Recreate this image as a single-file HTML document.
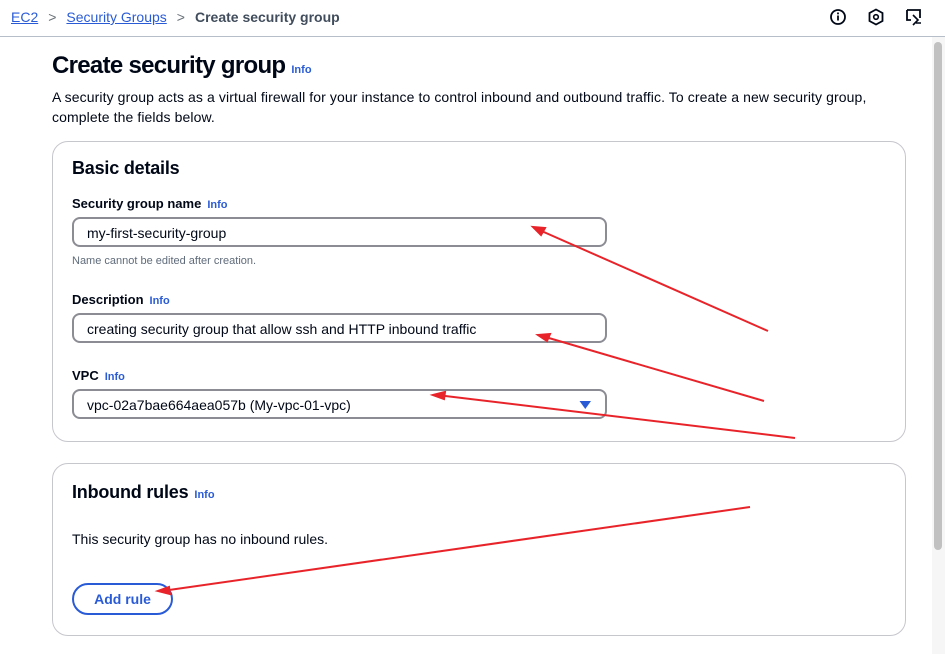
<!DOCTYPE html>
<html><head><meta charset="utf-8"><style>
*{box-sizing:border-box;margin:0;padding:0}
body{width:945px;height:654px;overflow:hidden;background:#fff;font-family:"Liberation Sans",sans-serif;color:#000716;position:relative}
.top{position:absolute;left:0;top:0;width:945px;height:37px;border-bottom:1px solid #b6bec9}
.bc{position:absolute;top:9px;left:11px;font-size:14px;color:#414d5c}
.bc a{text-decoration:underline;color:#2a5bd7}
.bc .s{margin:0 10px;color:#687078}
.ab{position:absolute;font-size:14px}
h1{position:absolute;left:52px;top:52px;font-size:24px;font-weight:bold;letter-spacing:-0.7px}
.info{color:#2a5bd7;font-size:11px;font-weight:bold;margin-left:6px;letter-spacing:0}
.desc{position:absolute;left:52px;top:87px;font-size:14px;line-height:20px;width:860px;color:#000716;letter-spacing:0.1px}
.card{position:absolute;left:52px;width:854px;border:1px solid #c6c6cd;border-radius:16px}
h2{position:absolute;left:72px;font-size:18px;font-weight:bold;letter-spacing:-0.2px}
.lbl{position:absolute;left:72px;font-size:13px;font-weight:bold}
.inp{position:absolute;left:72px;width:535px;height:30px;border:2px solid #8c8c94;border-radius:8px;font-size:14px;padding:6px 0 0 13px}
.sb{position:absolute;left:932px;top:37px;width:13px;height:617px;background:#f6f6f6}
.sb div{position:absolute;left:2px;top:5px;width:8px;height:508px;border-radius:4px;background:#c1c1c1}
.btn{position:absolute;left:72px;top:583px;width:101px;height:32px;border:2px solid #2a5bd7;border-radius:16px;color:#2a5bd7;font-weight:bold;font-size:14px;text-align:center;line-height:28px}
</style></head><body>
<div class="top">
<div class="bc"><a>EC2</a><span class="s">&gt;</span><a>Security Groups</a><span class="s">&gt;</span><span style="color:#414d5c;font-weight:bold">Create security group</span></div>
<svg style="position:absolute;left:828px;top:7px" width="100" height="20" viewBox="0 0 100 20">
<circle cx="10" cy="10" r="7" fill="none" stroke="#000716" stroke-width="1.8"/><rect x="9.1" y="8.5" width="1.8" height="5" fill="#000716"/><rect x="9.1" y="5.5" width="1.8" height="1.8" fill="#000716"/>
<path d="M48 2.5 L54.5 6 V14 L48 17.5 L41.5 14 V6 Z" fill="none" stroke="#000716" stroke-width="1.8"/><circle cx="48" cy="10" r="2.3" fill="none" stroke="#000716" stroke-width="1.6"/>
<path d="M79 3 H92 V11 M79 3 V13 H83" fill="none" stroke="#000716" stroke-width="1.8"/><path d="M85 8 L90 13 L85 18 M88 16 H93" fill="none" stroke="#000716" stroke-width="1.6"/>
</svg>
</div>
<div class="sb"><div></div></div>
<h1>Create security group<span class="info">Info</span></h1>
<div class="desc">A security group acts as a virtual firewall for your instance to control inbound and outbound traffic. To create a new security group, complete the fields below.</div>
<div class="card" style="top:141px;height:301px"></div>
<h2 style="top:158px">Basic details</h2>
<div class="lbl" style="top:196px">Security group name<span class="info">Info</span></div>
<div class="inp" style="top:217px">my-first-security-group</div>
<div class="ab" style="left:72px;top:255px;font-size:11px;color:#5f6b7a">Name cannot be edited after creation.</div>
<div class="lbl" style="top:292px">Description<span class="info">Info</span></div>
<div class="inp" style="top:313px">creating security group that allow ssh and HTTP inbound traffic</div>
<div class="lbl" style="top:368px">VPC<span class="info">Info</span></div>
<div class="inp" style="top:389px">vpc-02a7bae664aea057b (My-vpc-01-vpc)</div>
<svg style="position:absolute;left:579px;top:400px" width="13" height="10"><path d="M0.5 1 H12 L6.25 9 Z" fill="#2a5bd7"/></svg>
<div class="card" style="top:463px;height:173px"></div>
<h2 style="top:482px">Inbound rules<span class="info">Info</span></h2>
<div class="ab" style="left:72px;top:531px">This security group has no inbound rules.</div>
<div class="btn">Add rule</div>
<svg style="position:absolute;left:0;top:0" width="945" height="654">
<g stroke="#e8242a" stroke-width="2" fill="#e8242a">
<line x1="768" y1="331" x2="537" y2="229"/><path d="M533 227 L545 228 L541 235 Z"/>
<line x1="764" y1="401" x2="542" y2="336"/><path d="M538 335 L550 334 L547 341 Z"/>
<line x1="795" y1="438" x2="437" y2="395"/><path d="M433 395 L445 392 L444 399 Z"/>
<line x1="750" y1="507" x2="162" y2="591"/><path d="M158 591 L169 587 L170 594 Z"/>
</g></svg>
</body></html>
